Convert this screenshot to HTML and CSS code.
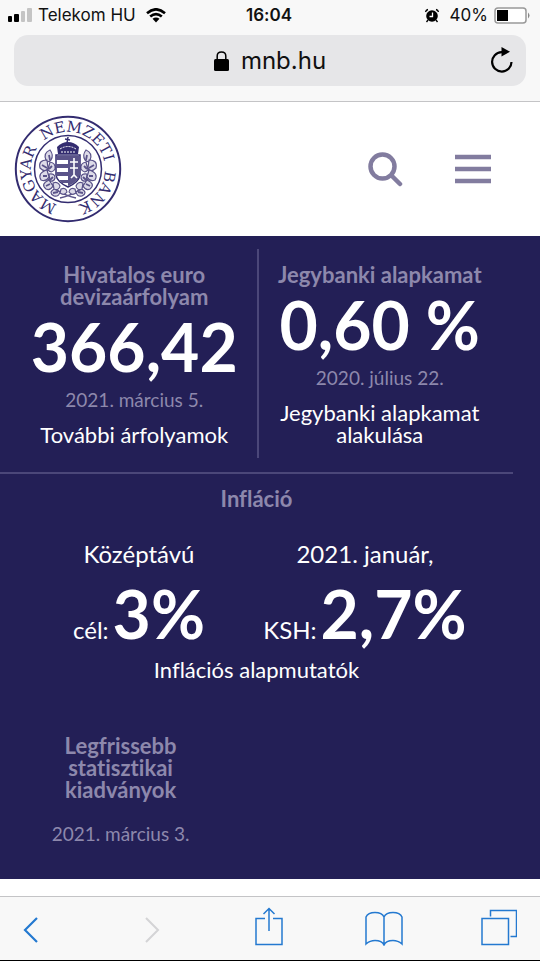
FILE: index.html
```
<!DOCTYPE html>
<html lang="hu">
<head>
<meta charset="utf-8">
<meta name="viewport" content="width=device-width, initial-scale=1">
<title>Magyar Nemzeti Bank</title>
<link rel="stylesheet" href="styles.css">
</head>
<body>
<div class="browser-top">
  <div class="status">
    <div class="status-left">
      <svg width="24" height="16" viewBox="0 0 24 16" aria-hidden="true"><rect y="9" width="4" height="6" rx="1"/><rect x="6" y="7" width="5" height="8" rx="1"/><g fill="#c4c4c4"><rect x="13" y="4" width="4" height="11" rx="1"/><rect x="19" y="1" width="5" height="14" rx="1"/></g></svg>
      <span>Telekom HU</span>
      <svg class="wifi" width="20" height="15" viewBox="0 0 20 15" aria-hidden="true"><path d="M1 5.2Q10-2.6 19 5.2M4.2 8.6Q10 3.6 15.800 8.600" fill="none" stroke="#000" stroke-width="2.600"/><path d="M6.500 10.800Q10 8 13.500 10.800L10 14.500Z"/></svg>
    </div>
    <span class="time">16:04</span>
    <div class="status-right">
      <svg width="16" height="15" viewBox="0 0 16 15" aria-hidden="true"><circle cx="8" cy="8" r="5.800"/><path d="M1.500 4Q2 2 4 1.500M14.500 4Q14 2 12 1.500M4 12L2.500 14M12 12L13.500 14" stroke="#000" stroke-width="1.300" fill="none"/><path d="M8.500 4.500V8.500H5.500" stroke="#fff" stroke-width="1.300" fill="none"/></svg>
      <span class="charge">40%</span>
      <svg width="36" height="17" viewBox="0 0 36 17" aria-hidden="true"><rect x="1" y="1" width="31" height="15" rx="3" fill="#fff" stroke="#999" stroke-width="1.500"/><rect x="3" y="3" width="11" height="11"/><path d="M34 5.500Q37 8.500 34 11.500Z" fill="#888"/></svg>
    </div>
  </div>
  <div class="address">
    <a class="host" href="#"><svg width="15" height="20" viewBox="0 0 15 20" aria-hidden="true"><rect y="8" width="15" height="12" rx="1.500"/><path d="M3.200 9V5Q3.200 1 7.500 1T11.800 5V9" fill="none" stroke="#000" stroke-width="1.500"/></svg>mnb.hu</a>
    <button class="reload" type="button" aria-label="Újratöltés"><svg width="24" height="27" viewBox="0 0 24 27"><path d="M12.500 5.200H11.500A9.700 9.700 0 1 0 21.500 15" fill="none" stroke="#000" stroke-width="2.200"/><path d="M11.500 0L20 4.700L11.500 9.500Z"/></svg></button>
  </div>
</div>

<header class="site-header">
  <a class="logo" href="#" aria-label="Magyar Nemzeti Bank">
    <svg width="108" height="108" viewBox="-54 -54 108 108">
      <defs>
        <path id="ring" d="M0 37A37 37 0 0 1 0-37A37 37 0 0 1 0 37"/>
        <path id="ring-top" d="M-37 0A37 37 0 0 1 37 0A37 37 0 0 1-37 0"/>
        <g id="branch" fill="#dddbe8" stroke="#5a5389" stroke-width="1.200">
          <path d="M8 29Q-14 24-20 10Q-24-2-18-14" fill="none" stroke-width="1.600"/>
          <path d="M-18-19Q-25-16-22-9Q-20-6-17-9Q-14-14-18-19ZM-21-9Q-30-9-28-1Q-23 4-20-1ZM-18-7Q-12-6-13 0Q-16 5-20 1ZM-21 1Q-31 4-27 11Q-22 13-19 8ZM-19 5Q-13 4-13 9Q-14 13-18 12ZM-19 11Q-28 15-22 20Q-18 22-15 17ZM-15 14Q-10 12-8 17Q-9 22-14 20ZM-14 20Q-20 24-14 27Q-9 28-8 23ZM-7 20Q-2 18-1 23Q-4 27-8 24Z"/>
          <path d="M-19-14L-18-9M-26-4L-21-1M-16-3L-19 0M-25 7L-21 7M-15 8L-18 11M-22 17L-18 15M-15 24L-10 23" stroke-width="1.800"/>
        </g>
      </defs>
      <g fill="none" stroke="#332c70"><circle r="52.200" stroke-width="2"/><circle r="33.500" stroke-width="1.500"/></g>
      <g class="logo-text">
        <text><textPath href="#ring" startOffset="19.400%">MAGYAR</textPath></text>
        <text><textPath href="#ring-top" startOffset="30.300%">NEMZETI</textPath></text>
        <text><textPath href="#ring-top" startOffset="60.600%">BANK</textPath></text>
      </g>
      <use href="#branch"/><use href="#branch" transform="scale(-1 1)"/>
      <path d="M-12-14H12V6Q11 13 0 18Q-11 13-12 6Z" fill="#fff" stroke="#332c70" stroke-width="1.500"/>
      <path d="M-12-13H0V-9H-12ZM-12-5H0V-1H-12ZM-12 3H0V7H-12ZM-9 11H0V14H-6ZM0-13H12V6Q10 13 0 17Z" fill="#5a5389"/>
      <path d="M6-11V7M2-7H10M2-1H10M3 9L6 6L9 9" stroke="#fff" stroke-width="1.600" fill="none"/>
      <path d="M-10-15L-11-22Q-6-27 0-27Q6-27 11-22L10-15Z" fill="#332c70"/>
      <path d="M-8-20Q0-25 8-20M-7-17H7" stroke="#fff" stroke-width="1" stroke-dasharray="2 1" fill="none"/>
      <path d="M-1-26L0-32M-3-30L2-29" stroke="#332c70" stroke-width="1.500"/>
    </svg>
  </a>
  <nav class="tools">
    <button type="button" aria-label="Keresés"><svg width="38" height="36" viewBox="0 0 38 36"><circle cx="15.500" cy="15.500" r="12" fill="none" stroke="#827c9f" stroke-width="4.500"/><path d="M24.500 24.500L33 33" stroke="#827c9f" stroke-width="4.500" stroke-linecap="round"/></svg></button>
    <button type="button" aria-label="Menü"><svg width="36" height="32" viewBox="0 0 36 32"><path d="M0 4H36M0 16H36M0 28H36" stroke="#827c9f" stroke-width="4.500"/></svg></button>
  </nav>
</header>

<main class="panel">
  <section class="rates">
    <article class="rate">
      <h2>Hivatalos euro<br>devizaárfolyam</h2>
      <strong class="figure">366,42</strong>
      <p class="date">2021. március 5.</p>
      <a href="#">További árfolyamok</a>
    </article>
    <article class="rate">
      <h2>Jegybanki alapkamat</h2>
      <strong class="figure">0,60 %</strong>
      <p class="date">2020. július 22.</p>
      <a href="#">Jegybanki alapkamat<br>alakulása</a>
    </article>
  </section>
  <section class="inflation">
    <h2>Infláció</h2>
    <div class="inflation-values">
      <div><p class="period">Középtávú</p><p class="value">cél: <strong class="figure">3%</strong></p></div>
      <div><p class="period">2021. január,</p><p class="value">KSH: <strong class="figure">2,7%</strong></p></div>
    </div>
    <a href="#">Inflációs alapmutatók</a>
  </section>
  <section class="releases">
    <h2>Legfrissebb<br>statisztikai<br>kiadványok</h2>
    <p class="date">2021. március 3.</p>
  </section>
</main>

<nav class="toolbar">
  <button type="button" aria-label="Vissza"><svg width="44" height="40" viewBox="0 0 44 40"><path d="M24 12L12 24L24 36" stroke-width="2.200"/></svg></button>
  <button type="button" aria-label="Előre" disabled><svg width="36" height="40" viewBox="0 0 36 40"><path d="M10 12L22 24L10 36" stroke-width="2"/></svg></button>
  <button type="button" aria-label="Megosztás"><svg width="36" height="40" viewBox="0 0 36 40"><path d="M15 12.500H6V38.500H32V12.500H23M19 25V2.500M13.500 8L19 2.500L24.500 8"/></svg></button>
  <button type="button" aria-label="Könyvjelzők"><svg width="38" height="40" viewBox="0 0 38 40"><path d="M19 11Q17 6.500 10 6.500Q3 6.500 1 11V38Q5 34.500 10 34.500Q17 34.500 19 39Q21 34.500 28 34.500Q33 34.500 37 38V11Q35 6.500 28 6.500Q21 6.500 19 11V39"/></svg></button>
  <button type="button" aria-label="Lapok"><svg width="36" height="40" viewBox="0 0 36 40"><path d="M1 12.500H27.500V38.500H1ZM9.500 10.500V4.500H35.500V30.500H29.500"/></svg></button>
</nav>
</body>
</html>
```
FILE: styles.css
```
* { box-sizing: border-box; }
body {
  margin: 0;
  min-height: 100vh;
  display: flex;
  flex-direction: column;
  background: #fff;
  font-family: Lato, "Noto Sans", sans-serif;
  font-size: 22px;
  line-height: 22px;
  font-variant-ligatures: none;
}
h2, p { margin: 0; font-size: inherit; }
a { color: inherit; text-decoration: none; }
button { border: 0; padding: 0; background: none; }
svg { display: block; }

.browser-top {
  background: #f8f8f8;
  border-bottom: 1px solid #c4c4c6;
  padding: 0 14px 15px;
  font-family: Inter, Roboto, sans-serif;
  color: #111;
}
.status {
  display: grid;
  grid-template-columns: 1fr auto 1fr;
  align-items: center;
  height: 30px;
  margin: 0 -4px 5px -6px;
  font-size: 17px;
}
.status-left, .status-right { display: flex; align-items: center; gap: 6px; }
.status-right { justify-content: flex-end; }
.wifi { margin-left: 4px; }
.time { font-weight: 600; }
.charge { margin-left: 4px; }
.address {
  display: grid;
  grid-template-columns: 1fr auto 1fr;
  align-items: center;
  height: 51px;
  padding: 0 12px;
  border-radius: 14px;
  background: #e6e6e8;
}
.host {
  grid-column: 2;
  display: flex;
  align-items: center;
  gap: 12px;
  font-size: 24px;
}
.reload { justify-self: end; }

.site-header {
  display: flex;
  align-items: center;
  justify-content: space-between;
  padding: 13px 49px 13px 14px;
}
.logo-text {
  font-family: "DejaVu Serif", serif;
  font-size: 15px;
  fill: #332c70;
  text-anchor: middle;
}
.tools { display: flex; align-items: center; gap: 50px; }

.panel {
  padding: 13px 27px 34px 0;
  background: #231f56;
  color: #fff;
  text-align: center;
}
.panel h2, .date { color: #8d88ac; }
.panel h2 { font-weight: 700; }
.date { font-size: 19px; }
.figure {
  font-size: 66px;
  line-height: 78px;
  font-weight: 700;
}
.rates {
  display: grid;
  grid-template-columns: 1fr 1fr;
  padding-bottom: 14px;
  border-bottom: 2px solid #4b4779;
}
.rate { padding: 15px 0 12px 12px; }
.rate + .rate { padding-left: 0; padding-right: 12px; border-left: 2px solid #4b4779; }
.rate .figure { display: block; }
.rate .date { margin: 3px 0 13px; }
.rate a { display: block; }
.inflation { padding-top: 14px; }
.inflation-values {
  display: grid;
  grid-template-columns: 1fr 1fr;
  padding: 33px 35px 6px 26px;
  font-size: 24px;
}
.period { margin-bottom: 10px; }
.value {
  display: flex;
  justify-content: center;
  align-items: baseline;
  gap: 4px;
}
.releases { width: 47%; margin-top: 54px; }
.releases .date { margin-top: 22px; }

.toolbar {
  display: flex;
  justify-content: space-between;
  align-items: flex-start;
  flex: 1;
  margin-top: 17px;
  padding: 9px 23px 0 13px;
  border-top: 1px solid #c4c4c6;
  border-bottom: 1px solid #000;
  background: #f8f8f8;
}
.toolbar svg { fill: none; stroke: #2479d0; stroke-width: 1.5px; }
.toolbar button:disabled svg { stroke: #d4d4d6; }
```
